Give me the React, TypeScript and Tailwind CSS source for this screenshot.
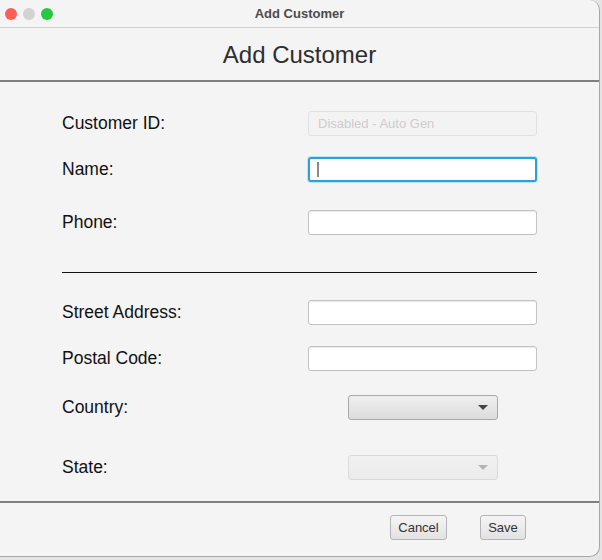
import React from 'react'

const font = { fontFamily: '"Liberation Sans", Arial, sans-serif' }

function Field({ focused }: { focused?: boolean }) {
  if (focused) {
    return (
      <div className="w-[229px] h-[25px] rounded-[3px] border-2 border-[#2aa2d8] bg-white flex items-center pl-[7px] shadow-[0_0_0_1px_#bfe3f5]">
        <div className="w-[2px] h-[15px] bg-[#8a8a8a]" />
      </div>
    )
  }
  return <div className="w-[229px] h-[25px] rounded-[3px] border border-[#c2c2c2] bg-white shadow-[inset_0_1px_1px_#ececec]" />
}

function Combo({ disabled }: { disabled?: boolean }) {
  return (
    <div
      className={
        'ml-[40px] w-[150px] h-[25px] rounded-[3px] border flex items-center justify-end pr-[9px] ' +
        (disabled
          ? 'border-[#dadada] bg-gradient-to-b from-[#f1f1f1] to-[#ebebeb]'
          : 'border-[#a9a9a9] bg-gradient-to-b from-[#efefef] to-[#dcdcdc]')
      }
    >
      <div
        className={
          'w-0 h-0 border-l-[5px] border-r-[5px] border-t-[5px] border-l-transparent border-r-transparent ' +
          (disabled ? 'border-t-[#b4b4b4]' : 'border-t-[#444]')
        }
      />
    </div>
  )
}

function Row({ label, children, className }: { label: string; children: React.ReactNode; className: string }) {
  return (
    <div className={'flex items-center h-[25px] pl-[62px] ' + className}>
      <div className="w-[246px] text-[17.5px] text-[#111]">{label}</div>
      {children}
    </div>
  )
}

export default function App() {
  return (
    <div className="w-[602px] h-[560px] bg-[#e4e4e4] overflow-hidden" style={font}>
      <div className="w-[600px] h-[557px] bg-[#f4f4f4] border-r border-b border-[#a8a8a8] rounded-tr-[10px] rounded-br-[10px] overflow-hidden flex flex-col">
        {/* title bar */}
        <div className="relative h-[28px] border-b border-[#d2d2d2] flex items-center pl-[5px] gap-[6px]">
          <div className="w-[12px] h-[12px] rounded-full bg-[#fe5f57]" />
          <div className="w-[12px] h-[12px] rounded-full bg-[#d2d2d2]" />
          <div className="w-[12px] h-[12px] rounded-full bg-[#28c840]" />
          <div className="absolute inset-0 flex items-center justify-center text-[13px] font-bold text-[#4b4b4b]">
            Add Customer
          </div>
        </div>

        <div className="h-[52px] flex items-center justify-center text-[24px] text-[#2e2e2e] pt-[1px]">Add Customer</div>
        <div className="h-[2px] bg-[#7f7f7f]" />

        <Row label="Customer ID:" className="mt-[29px]">
          <div className="w-[229px] h-[25px] rounded-[3px] border border-[#e1e1e1] bg-[#f3f3f3] flex items-center pl-[9px] text-[13px] text-[#cdcdcd]">
            Disabled - Auto Gen
          </div>
        </Row>
        <Row label="Name:" className="mt-[21px]">
          <Field focused />
        </Row>
        <Row label="Phone:" className="mt-[28px]">
          <Field />
        </Row>

        <div className="mt-[37px] ml-[62px] w-[475px] h-[1px] bg-[#111]" />

        <Row label="Street Address:" className="mt-[27px]">
          <Field />
        </Row>
        <Row label="Postal Code:" className="mt-[21px]">
          <Field />
        </Row>
        <Row label="Country:" className="mt-[24px]">
          <Combo />
        </Row>
        <Row label="State:" className="mt-[35px]">
          <Combo disabled />
        </Row>

        <div className="mt-[21px] h-[2px] bg-[#7f7f7f]" />

        <div className="mt-[12px] flex pl-[390px] gap-[33px]">
          <button className="w-[57px] h-[25px] rounded-[3px] border border-[#b4b4b4] bg-gradient-to-b from-[#f5f5f5] to-[#e2e2e2] text-[13px] text-[#333]">
            Cancel
          </button>
          <button className="w-[46px] h-[25px] rounded-[3px] border border-[#b4b4b4] bg-gradient-to-b from-[#f5f5f5] to-[#e2e2e2] text-[13px] text-[#333]">
            Save
          </button>
        </div>
      </div>
    </div>
  )
}
